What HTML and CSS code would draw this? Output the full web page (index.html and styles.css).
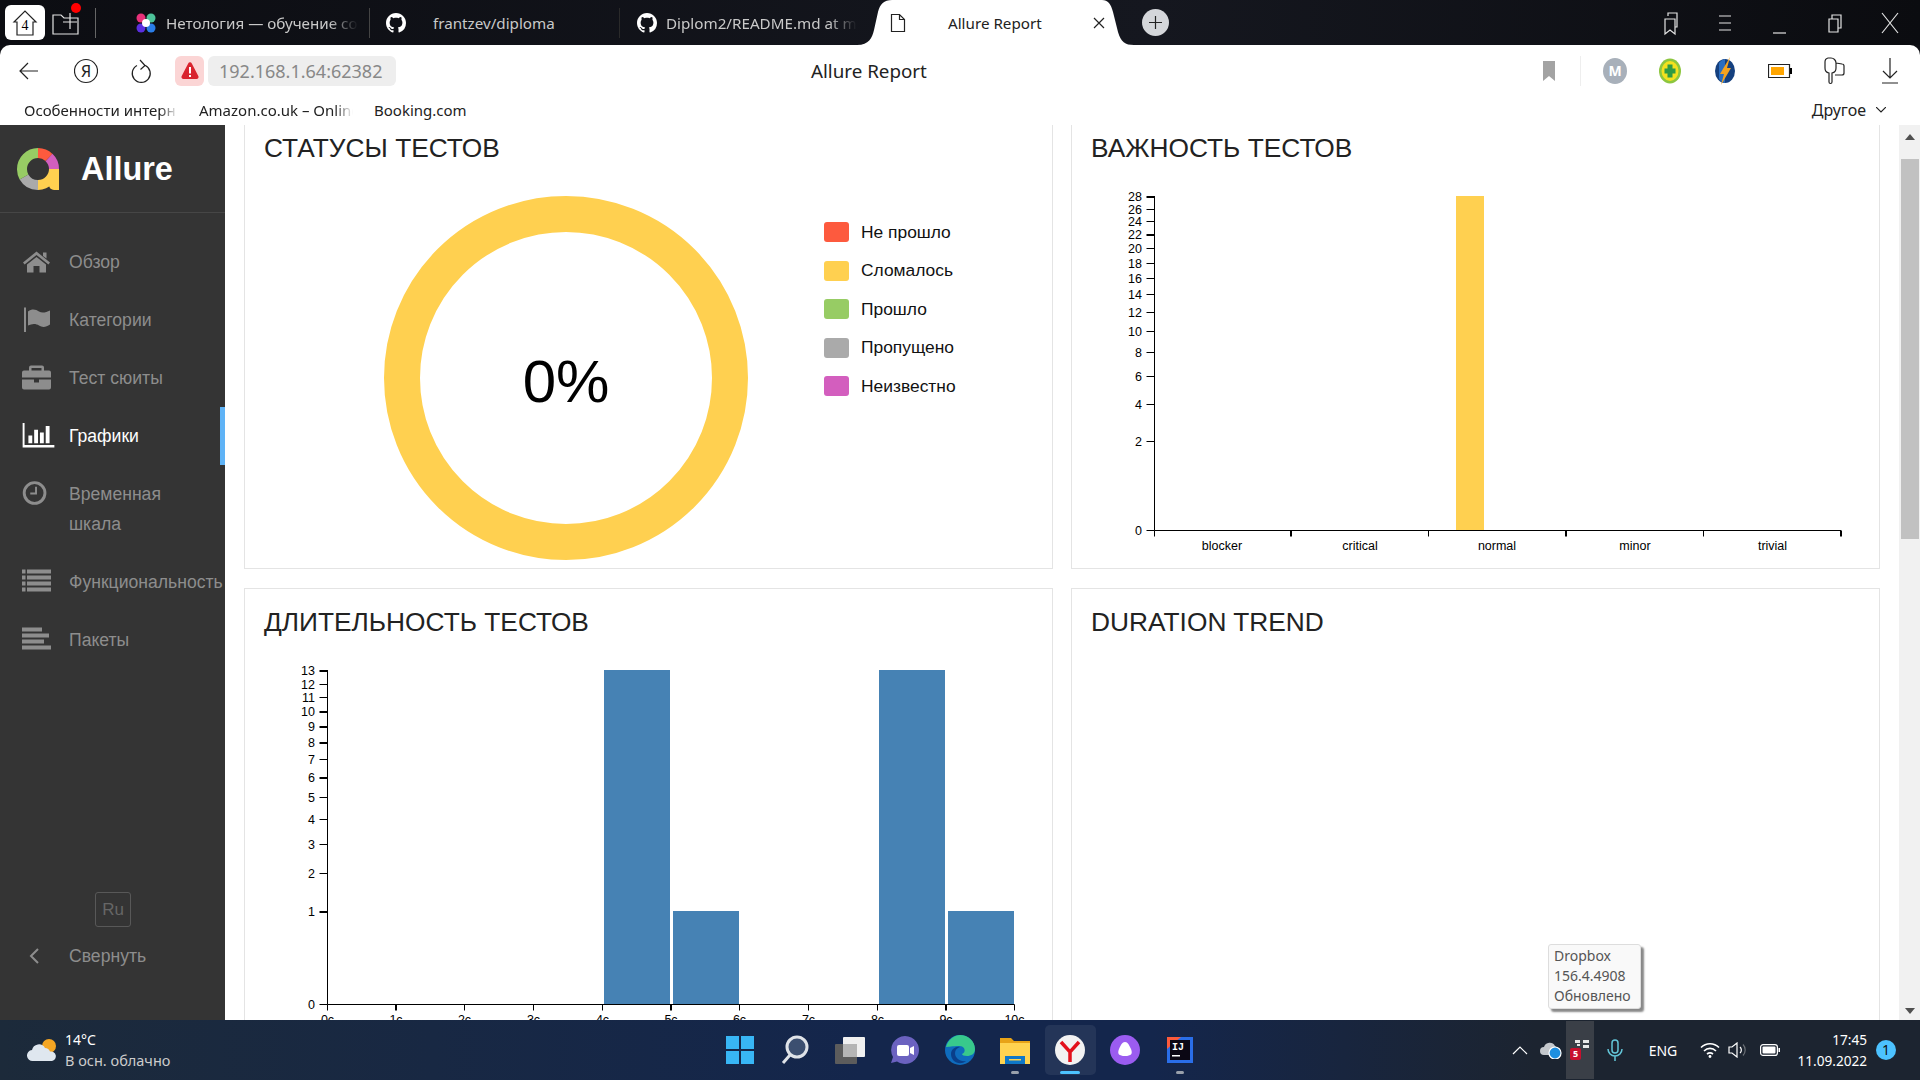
FILE: index.html
```html
<!DOCTYPE html>
<html lang="ru">
<head>
    <meta charset="UTF-8">
    <title>Allure Report</title>
    <link rel="stylesheet" href="styles.css">
</head>
<body>

    <!-- Browser tabs -->
    <div class="tabbar">
        <div class="home-tile">
            <svg width="28" height="30" viewBox="0 0 28 30"><path class="line-dark" d="M3 14 14 3l11 11h-3v13H6V14z"/><text x="14" y="22" class="home-num">4</text></svg>
        </div>
        <div class="new-group">
            <svg width="30" height="30" viewBox="0 0 30 30"><path class="line-light" d="M2 7h8l3 3h14v16H2zM19 5v16M12 14h14"/></svg>
            <span class="red-dot"></span>
        </div>
        <div class="tab tab-first">
            <svg class="tab-icon" width="20" height="20" viewBox="0 0 20 20"><circle cx="5" cy="5" r="4.5" fill="#e8317a"/><circle cx="15" cy="5" r="4.5" fill="#4dc39a"/><circle cx="5" cy="15" r="4.5" fill="#5a2ee0"/><circle cx="15" cy="15" r="4.5" fill="#2a7de8"/><circle cx="10" cy="10" r="4" fill="#fff"/></svg>
            <span class="tab-title tab-fade">Нетология — обучение со</span>
        </div>
        <div class="tab tab-second">
            <svg class="tab-icon" width="20" height="20" viewBox="0 0 16 16"><use href="#github"/></svg>
            <span class="tab-title">frantzev/diploma</span>
        </div>
        <div class="tab tab-third">
            <svg class="tab-icon" width="20" height="20" viewBox="0 0 16 16"><use href="#github"/></svg>
            <span class="tab-title tab-fade">Diplom2/README.md at ma</span>
        </div>
        <div class="tab-active">
            <svg width="16" height="20" viewBox="0 0 16 20"><path class="line-dark" d="M1.5 1.5h8l5 5v12h-13zM9.5 1.5v5h5"/></svg>
            <span class="tab-active-title">Allure Report</span>
            <svg class="tab-close" width="12" height="12" viewBox="0 0 12 12"><path class="line-dark" d="M1 1l10 10M11 1 1 11"/></svg>
        </div>
        <div class="new-tab">
            <svg width="13" height="13" viewBox="0 0 13 13"><path class="line-dark" d="M6.5 0v13M0 6.5h13"/></svg>
        </div>
        <div class="window-controls">
            <svg width="24" height="26" viewBox="0 0 24 26"><path class="line-light" d="M7 9h10v15l-5-4-5 4zM10 6V3h9v14h-2"/></svg>
            <svg width="24" height="24" viewBox="0 0 24 24"><path class="line-light" d="M6 5h12M6 12h12M6 19h12"/></svg>
            <svg width="24" height="24" viewBox="0 0 24 24"><path class="line-light" d="M5 22h13"/></svg>
            <svg width="24" height="24" viewBox="0 0 24 24"><path class="line-light" d="M6 8h9v13H6zM9 8V4h9v13h-3"/></svg>
            <svg width="24" height="24" viewBox="0 0 24 24"><path class="line-light" d="M4 2l16 20M20 2 4 22"/></svg>
        </div>
    </div>

    <!-- Address bar -->
    <div class="toolbar">
        <svg class="tool-back" width="24" height="24" viewBox="0 0 24 24"><path class="line-dark" d="M21 12H3M11 4l-8 8 8 8"/></svg>
        <svg class="tool-ya" width="24" height="26" viewBox="0 0 24 26"><circle class="line-dark" cx="12" cy="13" r="11.5"/><text x="12" y="19" class="ya-letter">Я</text></svg>
        <svg class="tool-reload" width="24" height="26" viewBox="0 0 24 26"><path class="line-dark" d="M8 7.500a9 9 0 1 0 8.500 0M11 2l5 5.500-4.500 4"/></svg>
        <div class="warning-tile">
            <svg width="20" height="20" viewBox="0 0 20 20"><path d="M8.200 2.500a2 2 0 0 1 3.600 0l6.500 12.500a2 2 0 0 1-1.800 3H3.500a2 2 0 0 1-1.800-3z" fill="#d9232e"/><path d="M9 6h2v6.500H9zM9 14h2v2H9z" fill="#fff"/></svg>
        </div>
        <div class="address">192.168.1.64:62382</div>
        <div class="page-title">Allure Report</div>
        <div class="toolbar-right">
            <svg class="tool-mark" width="24" height="24" viewBox="0 0 24 24"><path d="M6 2h12v20l-6-5-6 5z" fill="#a3a3a3"/></svg>
            <span class="tool-divider"></span>
            <span class="avatar">M</span>
            <svg width="24" height="26" viewBox="0 0 24 26"><ellipse cx="12" cy="13" rx="11" ry="12.5" fill="#8cc63f"/><ellipse cx="12" cy="13" rx="8.5" ry="10" fill="#f3e11e"/><path d="M9.5 6.5h5v4h3v5h-3v4h-5v-4h-3v-5h3z" fill="#2f9a44"/></svg>
            <svg width="24" height="28" viewBox="0 0 24 28"><ellipse cx="12" cy="14" rx="10" ry="12" fill="#15407f"/><path d="M6 6a9 11 0 0 1 6-4v24a9 11 0 0 1-6-4z" fill="#2a6dc0"/><path d="M17 0 7 17h4l-3 11 10-17h-4z" fill="#f5a31f"/></svg>
            <svg width="24" height="16" viewBox="0 0 24 16"><path class="line-dark" d="M.5 1.5h21v13H.5z"/><path d="M3 4h13v8H3z" fill="#ffa500"/><path d="M22 5h2v6h-2z"/></svg>
            <svg width="24" height="30" viewBox="0 0 24 30"><path class="line-dark" d="M5 2h3a5 5 0 0 1 5 5v5a5 5 0 0 1-4 5v9a1.500 1.500 0 0 1-3 0v-9a5 5 0 0 1-4-5V6a4 4 0 0 1 3-4zM13 7l6 1a2 2 0 0 1 2 2v7a2 2 0 0 1-2 2h-7"/></svg>
            <svg width="24" height="28" viewBox="0 0 24 28"><path class="line-dark" d="M12 1v20M5 14l7 7 7-7M4 26h16"/></svg>
        </div>
    </div>

    <!-- Bookmarks -->
    <div class="bookmarks">
        <span class="bookmark bookmark-fade">Особенности интерн</span>
        <span class="bookmark bookmark-fade">Amazon.co.uk – Online</span>
        <span class="bookmark">Booking.com</span>
        <span class="bookmarks-more">Другое
            <svg width="10" height="6" viewBox="0 0 10 6"><path class="line-dark" d="M0 0l5 5 5-5"/></svg>
        </span>
    </div>

    <div class="main">
        <!-- Allure side menu -->
        <aside class="sidebar">
            <div class="brand">
                <svg width="42" height="42" viewBox="0 0 42 42">
                    <path d="M42 42h-5a5 5 0 0 1-5-5V21h10v16z" fill="#ffd050"/>
                    <g fill="none" stroke-width="10">
                        <path d="M5 21A16 16 0 0 1 21 5" stroke="#97cc64"/>
                        <path d="M21 5A16 16 0 0 1 32 9.5" stroke="#fd5a3e"/>
                        <path d="M32 9.5A16 16 0 0 1 37 21" stroke="#d35ebe"/>
                        <path d="M37 21A16 16 0 0 1 21 37" stroke="#ffd050"/>
                        <path d="M21 37A16 16 0 0 1 7 29" stroke="#aaa"/>
                        <path d="M7 29A16 16 0 0 1 5 21" stroke="#97cc64"/>
                    </g>
                </svg>
                <span class="brand-name">Allure</span>
            </div>
            <nav class="nav">
                <a class="nav-item">
                    <svg class="nav-icon" viewBox="0 0 29 24"><path d="M14.5 2 28 13l-1.600 2L14.500 5.500 2.600 15 1 13zM21 3h3.500v6L21 6.500zM5 15 14.500 7.500 24 15v8h-6.500v-6.500h-6V23H5z"/></svg>
                    <span>Обзор</span>
                </a>
                <a class="nav-item">
                    <svg class="nav-icon" viewBox="0 0 29 24"><path d="M2 0h2v25H2zM6 4c4-3 8-2 11 0s7 1 11-1v14c-4 3-8 3-11 1s-7-2-11 0z"/></svg>
                    <span>Категории</span>
                </a>
                <a class="nav-item">
                    <svg class="nav-icon" viewBox="0 0 29 24"><path d="M9 0h11a2 2 0 0 1 2 2v3h5a2 2 0 0 1 2 2v5H0V7a2 2 0 0 1 2-2h5V2a2 2 0 0 1 2-2zm.500 2.500V5h10V2.500zM0 14h12v3h5v-3h12v8a2 2 0 0 1-2 2H2a2 2 0 0 1-2-2z"/></svg>
                    <span>Тест сюиты</span>
                </a>
                <a class="nav-item nav-active">
                    <svg class="nav-icon" viewBox="0 0 33 26"><path d="M0 0h2v23h31v2.500H0zM6 13h4v8H6zM12 7h4v14h-4zM18 10h4v11h-4zM24 3h4v18h-4z"/></svg>
                    <span>Графики</span>
                </a>
                <a class="nav-item">
                    <svg class="nav-icon" viewBox="0 0 29 26"><circle cx="12.500" cy="12.500" r="10.800" fill="none" stroke="#8d8d8d" stroke-width="3"/><path d="M13 6h2v8H8v-2h5z"/></svg>
                    <span>Временная<br>шкала</span>
                </a>
                <a class="nav-item">
                    <svg class="nav-icon" viewBox="0 0 29 24"><path d="M0 0h3.500v4H0zM5 0h24v4H5zM0 6h3.500v4H0zM5 6h24v4H5zM0 12h3.500v4H0zM5 12h24v4H5zM0 18h3.500v4H0zM5 18h24v4H5z"/></svg>
                    <span>Функциональность</span>
                </a>
                <a class="nav-item">
                    <svg class="nav-icon" viewBox="0 0 29 24"><path d="M0 0h20v4H0zM0 6h27v4H0zM0 12h22v4H0zM0 18h29v4H0z"/></svg>
                    <span>Пакеты</span>
                </a>
            </nav>
            <div class="sidebar-footer">
                <div class="lang">Ru</div>
                <a class="nav-item collapse">
                    <svg class="nav-chevron" width="10" height="16" viewBox="0 0 10 16"><path d="M9 1 2 8l7 7" fill="none" stroke="#8d8d8d" stroke-width="2"/></svg>
                    <span>Свернуть</span>
                </a>
            </div>
        </aside>

        <!-- Graphs -->
        <div class="content">
            <div class="charts">
                <section class="card">
                    <h2 class="card-title">Статусы тестов</h2>
                    <div class="status-body">
                        <svg class="chart status-chart" width="579" height="400" viewBox="0 0 579 400">
                            <circle cx="321" cy="213" r="164" fill="none" stroke="#ffd050" stroke-width="36"/>
                            <path d="M321 195v36" stroke="#fff" stroke-width="2"/>
                            <text x="321" y="236.500" class="donut-text">0%</text>
                        </svg>
                        <ul class="legend">
                            <li><span class="swatch swatch-failed"></span>Не прошло</li>
                            <li><span class="swatch swatch-broken"></span>Сломалось</li>
                            <li><span class="swatch swatch-passed"></span>Прошло</li>
                            <li><span class="swatch swatch-skipped"></span>Пропущено</li>
                            <li><span class="swatch swatch-unknown"></span>Неизвестно</li>
                        </ul>
                    </div>
                </section>

                <section class="card">
                    <h2 class="card-title">Важность тестов</h2>
                    <svg class="chart" width="806" height="400" viewBox="0 0 806 400">
                        <rect x="384" y="31" width="28" height="334" fill="#ffd050"/>
                        <path class="axis" d="M82.500 31v334.500M82.500 365.500H769"/>
                        <path class="axis" d="M74.500 44.500h8M74.500 56.500h8M74.500 83.500h8M74.500 98.500h8M74.500 113.500h8M74.500 129.500h8M74.500 147.500h8M74.500 166.500h8M74.500 187.500h8M74.500 211.500h8M74.500 239.500h8M74.500 276.500h8M74.500 365.500h8M82.500 365.500v6M356.500 365.500v6M631.500 365.500v6"/>
                        <path class="axis-thick" d="M74.500 32h8M74.500 70h8M219 365.500v6M494 365.500v6M769 365.500v6"/>
                        <g class="tick-y">
                            <text x="70" y="36">28</text><text x="70" y="49">26</text><text x="70" y="61">24</text><text x="70" y="74">22</text>
                            <text x="70" y="88">20</text><text x="70" y="103">18</text><text x="70" y="118">16</text><text x="70" y="134">14</text>
                            <text x="70" y="152">12</text><text x="70" y="171">10</text><text x="70" y="192">8</text><text x="70" y="216">6</text>
                            <text x="70" y="244">4</text><text x="70" y="281">2</text><text x="70" y="370">0</text>
                        </g>
                        <g class="tick-x">
                            <text x="150" y="385">blocker</text><text x="288" y="385">critical</text><text x="425" y="385">normal</text>
                            <text x="563" y="385">minor</text><text x="700.500" y="385">trivial</text>
                        </g>
                    </svg>
                </section>

                <section class="card">
                    <h2 class="card-title">Длительность тестов</h2>
                    <svg class="chart" width="806" height="400" viewBox="0 0 806 400">
                        <rect x="359" y="31" width="66" height="334" fill="#4682b4"/>
                        <rect x="428" y="272" width="66" height="93" fill="#4682b4"/>
                        <rect x="634" y="31" width="66" height="334" fill="#4682b4"/>
                        <rect x="703" y="272" width="66" height="93" fill="#4682b4"/>
                        <path class="axis" d="M82.500 31v334.500M82.500 365.500H769.500"/>
                        <path class="axis" d="M74.500 45.500h8M74.500 58.500h8M74.500 120.500h8M74.500 158.500h8M74.500 180.500h8M74.500 205.500h8M74.500 234.500h8M74.500 365.500h8M82.500 365.500v6M219.500 365.500v6M288.500 365.500v6M357.500 365.500v6M494.500 365.500v6M563.500 365.500v6M632.500 365.500v6M769.500 365.500v6"/>
                        <path class="axis-thick" d="M74.500 32h8M74.500 73h8M74.500 88h8M74.500 104h8M74.500 139h8M74.500 273h8M151 365.500v6M426 365.500v6M701 365.500v6"/>
                        <g class="tick-y">
                            <text x="70" y="36">13</text><text x="70" y="50">12</text><text x="70" y="63">11</text><text x="70" y="77">10</text>
                            <text x="70" y="92">9</text><text x="70" y="108">8</text><text x="70" y="125">7</text><text x="70" y="143">6</text>
                            <text x="70" y="163">5</text><text x="70" y="185">4</text><text x="70" y="210">3</text><text x="70" y="239">2</text>
                            <text x="70" y="277">1</text><text x="70" y="370">0</text>
                        </g>
                        <g class="tick-x">
                            <text x="82.500" y="385">0с</text><text x="151" y="385">1с</text><text x="219.500" y="385">2с</text><text x="288.500" y="385">3с</text>
                            <text x="357.500" y="385">4с</text><text x="426" y="385">5с</text><text x="494.500" y="385">6с</text><text x="563.500" y="385">7с</text>
                            <text x="632.500" y="385">8с</text><text x="701" y="385">9с</text><text x="769.500" y="385">10с</text>
                        </g>
                    </svg>
                </section>

                <section class="card">
                    <h2 class="card-title">Duration trend</h2>
                </section>
            </div>

            <div class="tooltip">Dropbox<br>156.4.4908<br>Обновлено</div>
        </div>

        <div class="scrollbar">
            <span class="arrow-up"></span>
            <span class="scroll-thumb"></span>
            <span class="arrow-down"></span>
        </div>
    </div>

    <!-- Windows taskbar -->
    <div class="taskbar">
        <div class="weather">
            <svg width="30" height="24" viewBox="0 0 30 24">
                <circle cx="22" cy="8" r="7" fill="#f5a623"/>
                <path d="M6 23a5.500 5.500 0 0 1-1-11 7 7 0 0 1 13-2 5.500 5.500 0 0 1 5 3.500 4.800 4.800 0 0 1 2 9.500z" fill="#dfe7ef"/>
            </svg>
            <div class="weather-text">
                <div class="weather-temp">14°C</div>
                <div class="weather-desc">В осн. облачно</div>
            </div>
        </div>

        <div class="task-icons">
            <div class="task-cell">
                <svg width="30" height="30" viewBox="0 0 30 30"><path d="M1 1h13v13H1zM16 1h13v13H16zM1 16h13v13H1zM16 16h13v13H16z" fill="#38b6f5"/></svg>
            </div>
            <div class="task-cell">
                <svg width="28" height="30" viewBox="0 0 28 30"><circle cx="16" cy="12" r="10" fill="#3c4f70" stroke="#dfe3e8" stroke-width="3"/><path d="M9 20 2 28" stroke="#dfe3e8" stroke-width="3"/></svg>
            </div>
            <div class="task-cell">
                <svg width="30" height="28" viewBox="0 0 30 28"><rect x="8" y="1" width="22" height="20" rx="1" fill="#f0f0f0"/><rect x="0" y="8" width="22" height="20" rx="1" fill="#5c5c5c"/><rect x="8" y="8" width="14" height="13" fill="#b5b5b5"/></svg>
            </div>
            <div class="task-cell">
                <svg width="30" height="30" viewBox="0 0 30 30"><path d="M15 1a14 14 0 1 1-8 25.500L1 28l2-6A14 14 0 0 1 15 1z" fill="#6b62c0"/><rect x="7" y="10" width="12" height="11" rx="2" fill="#fff"/><path d="M20 13l4-2v9l-4-2z" fill="#fff"/></svg>
            </div>
            <div class="task-cell">
                <svg width="30" height="30" viewBox="0 0 30 30"><circle cx="15" cy="15" r="15" fill="#0f6cbd"/><path d="M1 12C3 4 10 0 15 0c8 0 15 6 15 14 0 5-4 7-8 7-3 0-5-1-5-2 4-1 4-8-3-8-6 0-11 1-13 1z" fill="#38c98c"/><path d="M10 18c0 5 5 9 11 8-6 5-15 1-15-7 0-5 5-8 9-7-3 1-5 3-5 6z" fill="#0a3f8a"/></svg>
            </div>
            <div class="task-cell">
                <svg width="30" height="28" viewBox="0 0 30 28"><path d="M0 2h11l3 3h16v23H0z" fill="#e8a317"/><path d="M0 7h30v21H0z" fill="#ffd350"/><path d="M5 20h20v8H5z" fill="#0f78c8"/><path d="M9 23h12v1.500H9z" fill="#ffd350"/></svg>
                <span class="task-dot"></span>
            </div>
            <div class="task-cell task-current">
                <svg width="30" height="30" viewBox="0 0 30 30"><circle cx="15" cy="15" r="15" fill="#f2f2f2"/><path d="M6 7l9 10 9-10M15 17v10" fill="none" stroke="#e3111c" stroke-width="3.500"/></svg>
                <span class="task-dot task-dot-active"></span>
            </div>
            <div class="task-cell">
                <svg width="30" height="30" viewBox="0 0 30 30"><circle cx="15" cy="15" r="15" fill="#9b5cf0"/><path d="M15 7c3 0 4 3 6 7 2 5 0 7-6 7s-8-2-6-7c2-4 3-7 6-7z" fill="#fff"/></svg>
            </div>
            <div class="task-cell">
                <svg width="26" height="26" viewBox="0 0 26 26"><rect width="26" height="26" fill="#2a6ee8"/><path d="M0 0h14L0 12z" fill="#fc5a3b"/><rect x="3" y="3" width="20" height="20" fill="#0b0714"/><text x="5" y="13" class="ij-text">IJ</text><path d="M5 18h8v1.500H5z" fill="#fff"/></svg>
                <span class="task-dot"></span>
            </div>
        </div>

        <div class="tray">
            <div class="tray-item tray-chevron"><svg width="16" height="9" viewBox="0 0 16 9"><path d="M1 8l7-7 7 7" fill="none" stroke="#fff" stroke-width="1.200"/></svg></div>
            <div class="tray-item tray-cloud">
                <svg width="22" height="18" viewBox="0 0 22 18"><path d="M4 14a4 4 0 0 1 0-8 6 6 0 0 1 11-1 4.500 4.500 0 0 1 2 6v3z" fill="#c4c8cc"/><circle cx="15" cy="12" r="6" fill="#1d8fe0" stroke="#fff" stroke-width="1.200"/></svg>
            </div>
            <div class="tray-item tray-dropbox">
                <svg width="22" height="22" viewBox="0 0 22 22"><path d="M6 1h5v3H6zM14 1h6v3h-6zM14 6h6v3h-6zM8 5h3v2H8z" fill="#e8e8e8"/><rect x="1" y="9" width="11" height="12" rx="2" fill="#c8102e"/><text x="6.500" y="18" class="badge-five">5</text></svg>
            </div>
            <div class="tray-item tray-mic">
                <svg width="16" height="22" viewBox="0 0 16 22"><rect x="5" y="1" width="6" height="13" rx="3" fill="none" stroke="#63c6d8" stroke-width="1.500"/><path d="M1 10a7 7 0 0 0 14 0M8 17v5" fill="none" stroke="#63c6d8" stroke-width="1.500"/></svg>
            </div>
            <div class="tray-item tray-lang">ENG</div>
            <div class="tray-item tray-wifi">
                <svg width="20" height="16" viewBox="0 0 20 16"><path d="M1 5.500c5-5 13-5 18 0M4 9c3.500-3.500 8.500-3.500 12 0M7 12c2-1.500 4-1.500 6 0" fill="none" stroke="#fff" stroke-width="1.600"/><circle cx="10" cy="14.500" r="1.400" fill="#fff"/></svg>
            </div>
            <div class="tray-item tray-sound">
                <svg width="20" height="16" viewBox="0 0 20 16"><path d="M1 5h3l5-4v14l-5-4H1z" fill="none" stroke="#fff" stroke-width="1.200"/><path d="M12 5a4 4 0 0 1 0 6" fill="none" stroke="#fff" stroke-width="1.200"/><path d="M15 2.500a8 8 0 0 1 0 11" fill="none" stroke="#6a6f75" stroke-width="1.200"/></svg>
            </div>
            <div class="tray-item tray-battery">
                <svg width="20" height="12" viewBox="0 0 20 12"><rect x=".600" y=".600" width="16.800" height="10.800" rx="2.500" fill="none" stroke="#fff" stroke-width="1.200"/><rect x="2.500" y="2.500" width="13" height="7" rx="1" fill="#fff"/><path d="M18.500 4h1.500v4h-1.500z" fill="#fff"/></svg>
            </div>
            <div class="tray-clock">17:45<br>11.09.2022</div>
            <div class="tray-item tray-badge"><span class="notify">1</span></div>
        </div>
    </div>

    <!-- Shared icon -->
    <svg class="defs" width="0" height="0">
        <symbol id="github" viewBox="0 0 16 16">
            <path fill="#fff" d="M8 0C3.580 0 0 3.580 0 8c0 3.540 2.290 6.530 5.470 7.590.400.070.550-.170.550-.380 0-.190-.010-.820-.010-1.490-2.010.370-2.530-.490-2.690-.940-.090-.230-.480-.940-.820-1.130-.280-.150-.680-.520-.010-.530.630-.010 1.080.580 1.230.820.720 1.210 1.870.870 2.330.660.070-.520.280-.870.510-1.070-1.780-.200-3.640-.890-3.640-3.950 0-.870.310-1.590.820-2.150-.080-.200-.360-1.020.080-2.120 0 0 .670-.210 2.200.820.640-.180 1.320-.270 2-.270s1.360.090 2 .270c1.530-1.040 2.200-.820 2.200-.820.440 1.100.160 1.920.080 2.120.510.560.820 1.270.820 2.150 0 3.070-1.870 3.750-3.650 3.950.290.250.540.730.540 1.480 0 1.070-.010 1.930-.010 2.200 0 .210.150.460.550.380A8.010 8.010 0 0 0 16 8c0-4.420-3.580-8-8-8z"/>
        </symbol>
    </svg>

</body>
</html>
```

FILE: styles.css
```css
/* Page frame */
* {
    box-sizing: border-box;
}

html, body {
    height: 100%;
}

body {
    margin: 0;
    display: flex;
    flex-direction: column;
    height: 100vh;
    overflow: hidden;
    background: #0e0f14;
    font-family: 'Noto Sans', sans-serif;
}

.defs {
    display: none;
}

svg {
    display: block;
    flex: none;
}

.line-light {
    fill: none;
    stroke: #e4e4e4;
    stroke-width: 1.2;
}

.line-dark {
    fill: none;
    stroke: #222;
    stroke-width: 1.2;
}

/* Tab strip */
.tabbar {
    display: flex;
    align-items: center;
    height: 45px;
    flex: none;
    background: linear-gradient(90deg, #0c0d12, #15171f 60%, #0b0c10);
    color: #c9c9c9;
    font-size: 15.2px;
}

.home-tile {
    display: flex;
    justify-content: center;
    align-items: center;
    width: 40px;
    height: 35px;
    margin-left: 5px;
    background: #fff;
    border-radius: 6px;
}

.home-num {
    font-family: 'Liberation Serif', serif;
    font-size: 14px;
    text-anchor: middle;
}

.new-group {
    position: relative;
    width: 45px;
    height: 30px;
    margin-left: 6px;
    border-right: 1px solid #666;
}

.red-dot {
    position: absolute;
    top: -5px;
    left: 20px;
    width: 10px;
    height: 10px;
    background: #f00;
    border-radius: 50%;
}

.tab {
    display: flex;
    align-items: center;
    height: 30px;
    flex: none;
}

.tab-first {
    width: 274px;
    padding-left: 40px;
    gap: 10px;
    border-right: 1px solid #444;
}

.tab-second {
    width: 250px;
    padding-left: 16px;
    gap: 27px;
    border-right: 1px solid #2a2a2a;
}

.tab-third {
    width: 237px;
    padding-left: 17px;
    gap: 9px;
}

.tab-title {
    white-space: nowrap;
    overflow: hidden;
}

.tab-fade {
    width: 192px;
    -webkit-mask-image: linear-gradient(90deg, #000 85%, transparent);
    mask-image: linear-gradient(90deg, #000 85%, transparent);
}

.tab-active {
    display: flex;
    align-items: center;
    width: 277px;
    height: 45px;
    flex: none;
    padding-left: 33px;
    background: #fff;
    color: #222;
    clip-path: path('M0 45C12 45 15 38 17 30L21 12C23 4 27 0 35 0L245 0C251 0 254 4 256 12L261 32C264 42 268 45 277 45Z');
}

.tab-active-title {
    margin-left: 42px;
    width: 145px;
}

.tab-close {
    margin-top: 1px;
}

.new-tab {
    display: flex;
    justify-content: center;
    align-items: center;
    width: 27px;
    height: 27px;
    margin-left: 8px;
    background: #d4d6da;
    border-radius: 50%;
}

.window-controls {
    display: flex;
    align-items: center;
    gap: 31px;
    margin-left: auto;
    padding-right: 18px;
}

/* Address bar */
.toolbar {
    display: flex;
    align-items: center;
    height: 52px;
    flex: none;
    background: #fff;
    border-radius: 10px 10px 0 0;
    color: #222;
}

.tool-back {
    margin-left: 17px;
}

.tool-ya {
    margin-left: 33px;
}

.ya-letter {
    font-size: 16px;
    text-anchor: middle;
    fill: #222;
}

.tool-reload {
    margin-left: 31px;
}

.warning-tile {
    display: flex;
    justify-content: center;
    align-items: center;
    width: 29px;
    height: 30px;
    margin-left: 22px;
    background: #fbd5d5;
    border-radius: 6px;
}

.address {
    width: 188px;
    height: 30px;
    margin-left: 4px;
    padding-left: 11px;
    background: #eee;
    border-radius: 6px;
    color: #888;
    font-size: 18px;
    line-height: 30px;
    white-space: nowrap;
}

.page-title {
    margin-left: 415px;
    font-size: 18.8px;
}

.toolbar-right {
    display: flex;
    align-items: center;
    gap: 31px;
    margin-left: auto;
    padding-right: 18px;
}

.tool-mark {
    margin-right: -12px;
}

.tool-divider {
    width: 1px;
    height: 30px;
    background: #eee;
    margin-right: -9px;
}

.avatar {
    width: 24px;
    height: 26px;
    background: #a8b0ba;
    border-radius: 50%;
    color: #fff;
    font-size: 14px;
    font-weight: 700;
    line-height: 26px;
    text-align: center;
}

/* Bookmarks row */
.bookmarks {
    display: flex;
    align-items: center;
    height: 28px;
    flex: none;
    padding: 0 34px 3px 24px;
    background: #fff;
    color: #222;
    font-size: 15px;
}

.bookmark {
    margin-right: 21px;
    white-space: nowrap;
    overflow: hidden;
}

.bookmark-fade {
    width: 154px;
    -webkit-mask-image: linear-gradient(90deg, #000 88%, transparent);
    mask-image: linear-gradient(90deg, #000 88%, transparent);
}

.bookmarks-more {
    display: flex;
    align-items: center;
    gap: 10px;
    margin-left: auto;
    font-size: 16px;
}

/* Main area */
.main {
    display: flex;
    flex: 1;
    min-height: 0;
    overflow: hidden;
    background: #fff;
    font-family: 'Liberation Sans', sans-serif;
}

.sidebar {
    display: flex;
    flex-direction: column;
    width: 225px;
    flex: none;
    background: #343434;
    color: #8d8d8d;
    font-size: 17.6px;
    line-height: 30px;
}

.brand {
    display: flex;
    align-items: center;
    gap: 22px;
    height: 88px;
    padding-left: 17px;
    border-bottom: 1px solid #464646;
}

.brand-name {
    color: #fff;
    font-size: 32.4px;
    font-weight: 700;
}

.nav {
    padding-top: 20px;
}

.nav-item {
    display: flex;
    gap: 18px;
    padding: 14px 0 14px 22px;
    white-space: nowrap;
}

.nav-icon {
    width: 29px;
    height: 25px;
    margin-top: 2px;
    fill: #8d8d8d;
}

.nav-active {
    color: #fff;
    border-right: 5px solid #5fb3f6;
}

.nav-active .nav-icon {
    fill: #fff;
    width: 33px;
    margin-right: -4px;
}

.sidebar-footer {
    margin-top: auto;
    padding-bottom: 35px;
}

.lang {
    width: 36px;
    height: 35px;
    margin-left: 95px;
    border: 1px solid #585858;
    border-radius: 3px;
    color: #666;
    font-size: 17px;
    line-height: 33px;
    text-align: center;
}

.collapse {
    gap: 30px;
    padding-left: 29px;
    align-items: center;
}

/* Chart cards */
.content {
    position: relative;
    flex: 1;
    min-width: 0;
    padding: 0 19px;
}

.charts {
    display: grid;
    grid-template-columns: 809px 809px;
    grid-auto-rows: 455px;
    gap: 19px 18px;
    margin-top: -11px;
}

.card {
    border: 1px solid #e4e4e4;
    background: #fff;
}

.card-title {
    margin: 17px 19px 0;
    color: #222;
    font-size: 26.3px;
    font-weight: 400;
    line-height: 33px;
    text-transform: uppercase;
}

.status-body {
    display: flex;
}

.legend {
    margin: 48px 0 0;
    padding: 0;
    color: #111;
    font-size: 17.4px;
    list-style: none;
}

.legend li {
    display: flex;
    align-items: center;
    gap: 12px;
    height: 38.5px;
}

.swatch {
    width: 25px;
    height: 20px;
    border-radius: 3px;
}

.swatch-failed {
    background: #fd5a3e;
}

.swatch-broken {
    background: #ffd050;
}

.swatch-passed {
    background: #97cc64;
}

.swatch-skipped {
    background: #aaa;
}

.swatch-unknown {
    background: #d35ebe;
}

.donut-text {
    font-size: 60px;
    text-anchor: middle;
}

.axis {
    fill: none;
    stroke: #000;
    stroke-width: 1;
}

.axis-thick {
    fill: none;
    stroke: #000;
    stroke-width: 2;
}

.tick-y text,
.tick-x text {
    font-size: 12.5px;
}

.tick-y text {
    text-anchor: end;
}

.tick-x text {
    text-anchor: middle;
}

.tooltip {
    position: absolute;
    top: 819px;
    left: 1323px;
    width: 93px;
    height: 65px;
    padding: 1px 5px;
    background: #f9f9f9;
    border: 1px solid #ddd;
    border-radius: 3px;
    box-shadow: 3px 3px 2px #888;
    color: #555;
    font-family: 'Noto Sans', sans-serif;
    font-size: 14px;
    line-height: 20px;
    white-space: nowrap;
}

.scrollbar {
    position: relative;
    display: flex;
    flex-direction: column;
    align-items: center;
    width: 21px;
    flex: none;
    padding-top: 9px;
    background: #f1f1f1;
}

.scroll-thumb {
    width: 18px;
    height: 380px;
    margin-top: 19px;
    background: #c1c1c1;
}

.arrow-up,
.arrow-down {
    width: 0;
    height: 0;
    border-left: 5px solid transparent;
    border-right: 5px solid transparent;
}

.arrow-up {
    border-bottom: 6px solid #505050;
}

.arrow-down {
    margin-top: auto;
    margin-bottom: 6px;
    border-top: 6px solid #505050;
}

/* Taskbar */
.taskbar {
    display: grid;
    grid-template-columns: 1fr auto 1fr;
    height: 60px;
    flex: none;
    background: linear-gradient(90deg, #1c2a3a, #14264c 45%, #14264c 60%, #1c2430 80%);
    color: #fff;
}

.weather {
    display: flex;
    align-items: center;
    gap: 8px;
    padding-left: 27px;
}

.weather-temp {
    font-size: 14px;
    line-height: 20px;
}

.weather-desc {
    color: #ccc;
    font-size: 14.5px;
    line-height: 20px;
}

.task-icons {
    display: flex;
}

.task-cell {
    position: relative;
    display: flex;
    justify-content: center;
    align-items: center;
    width: 55px;
}

.task-current::before {
    content: '';
    position: absolute;
    top: 5px;
    bottom: 5px;
    left: 2px;
    right: 2px;
    background: rgba(255, 255, 255, 0.07);
    border-radius: 5px;
}

.task-cell svg {
    position: relative;
}

.task-dot {
    position: absolute;
    bottom: 6px;
    width: 8px;
    height: 3px;
    background: #99a0ab;
    border-radius: 2px;
}

.task-dot-active {
    width: 20px;
    background: #4cc2ff;
}

.tray {
    display: flex;
    justify-content: flex-end;
    padding-right: 15px;
    font-size: 14px;
}

.tray-item {
    display: flex;
    justify-content: center;
    align-items: center;
}

.tray-chevron {
    width: 30px;
}

.tray-cloud {
    width: 31px;
}

.tray-dropbox {
    width: 28px;
    background: #3a3f47;
    margin: 1px 0;
}

.tray-mic {
    width: 42px;
}

.tray-lang {
    width: 54px;
}

.tray-wifi {
    width: 40px;
}

.tray-sound {
    width: 16px;
}

.tray-battery {
    width: 48px;
}

.tray-clock {
    width: 73px;
    align-self: center;
    font-size: 13.6px;
    line-height: 21px;
    text-align: right;
}

.tray-badge {
    width: 38px;
}

.notify {
    width: 20px;
    height: 20px;
    background: #4cc2ff;
    border-radius: 50%;
    color: #111;
    font-size: 14px;
    line-height: 20px;
    text-align: center;
}

.ij-text {
    font-family: 'Liberation Mono', monospace;
    font-size: 10px;
    font-weight: 700;
    fill: #fff;
}

.badge-five {
    font-size: 9px;
    font-weight: 700;
    fill: #fff;
    text-anchor: middle;
}
```
